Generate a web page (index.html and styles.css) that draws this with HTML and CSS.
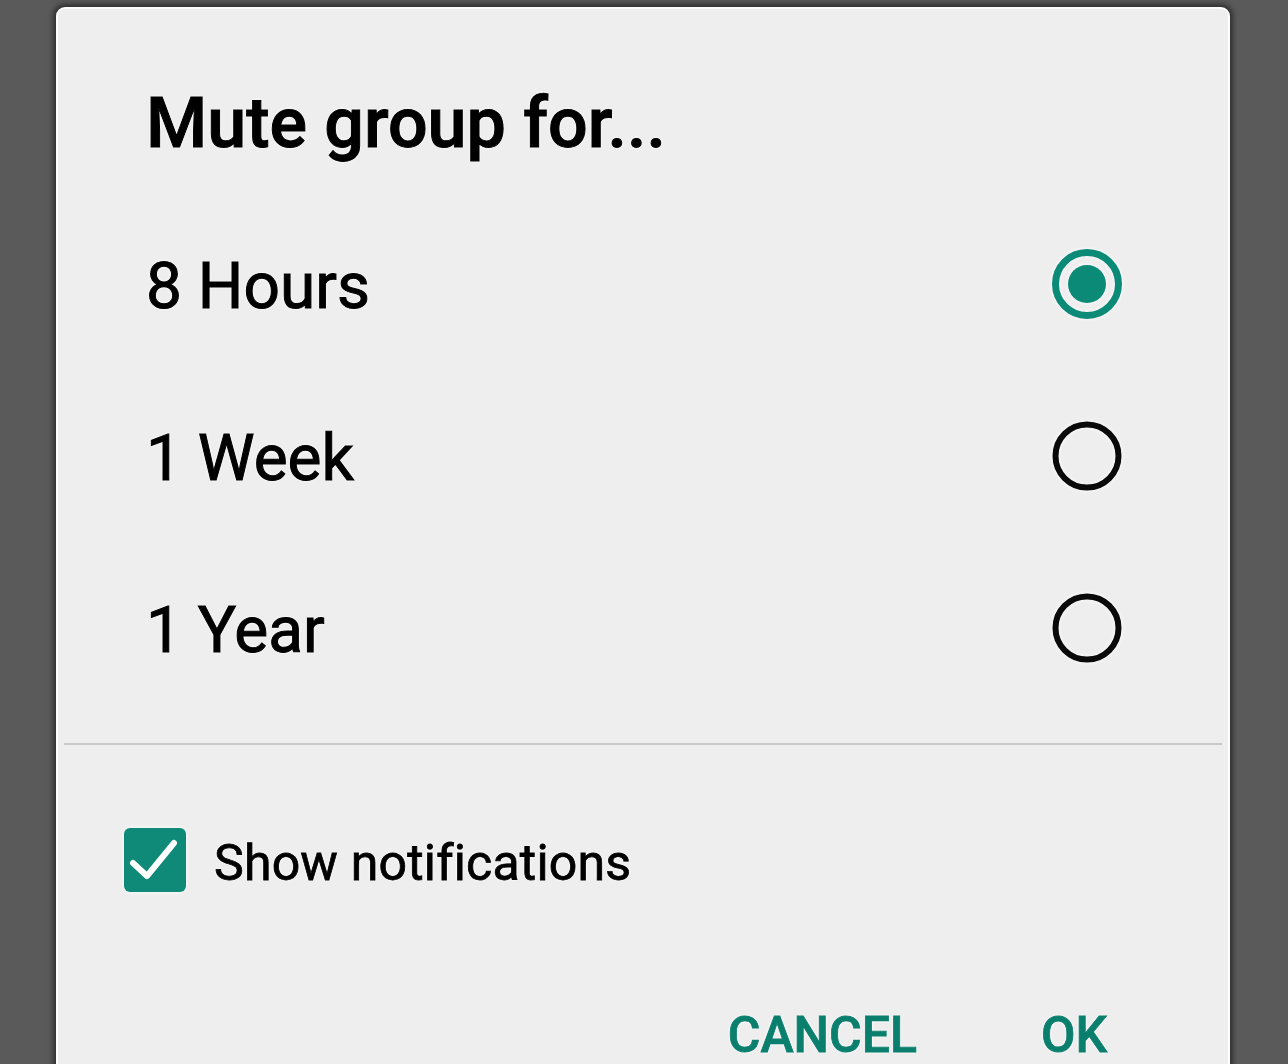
FILE: index.html
```html
<!DOCTYPE html>
<html lang="en">
<head>
  <meta charset="UTF-8">
  <meta name="viewport" content="width=device-width, initial-scale=1.0">
  <title>Mute group</title>
  <link rel="stylesheet" href="styles.css">
</head>
<body>
  <div class="dialog">
    <h2 class="dialog-title">Mute group for...</h2>

    <!-- Duration options -->
    <div class="options">
      <label class="option">
        <span class="option-text">8 Hours</span>
        <svg class="radio" width="72" height="72" viewBox="0 0 72 72">
          <circle cx="36" cy="36" r="31.5" fill="none" stroke="#0b8a78" stroke-width="7"/>
          <circle cx="36" cy="36" r="19" fill="#0b8a78"/>
        </svg>
      </label>
      <label class="option">
        <span class="option-text">1 Week</span>
        <svg class="radio" width="72" height="72" viewBox="0 0 72 72">
          <circle cx="36" cy="36" r="31.5" fill="none" stroke="#0a0a0a" stroke-width="6"/>
        </svg>
      </label>
      <label class="option">
        <span class="option-text">1 Year</span>
        <svg class="radio" width="72" height="72" viewBox="0 0 72 72">
          <circle cx="36" cy="36" r="31.5" fill="none" stroke="#0a0a0a" stroke-width="6"/>
        </svg>
      </label>
    </div>

    <div class="divider"></div>

    <label class="check-row">
      <svg class="checkbox" width="62" height="64" viewBox="0 0 62 64">
        <rect x="0" y="0" width="62" height="64" rx="6" fill="#0f8a79"/>
        <polyline points="9,35 23,48 50,15" fill="none" stroke="#fff" stroke-width="6" stroke-linecap="round" stroke-linejoin="round"/>
      </svg>
      <span class="check-text">Show notifications</span>
    </label>

    <div class="button-group">
      <button class="btn">CANCEL</button>
      <button class="btn">OK</button>
    </div>
  </div>
</body>
</html>
```

FILE: styles.css
```css
html, body {
  height: 100%;
}
body {
  margin: 0;
  padding: 7px 0 0 0;
  background-color: #5a5a5a;
  font-family: Roboto, "Liberation Sans", Arial, sans-serif;
  overflow: hidden;
  box-sizing: border-box;
}
.dialog {
  margin-left: 56px;
  width: 1174px;
  height: 1120px;
  box-sizing: border-box;
  background: #eeeeee;
  border: 2px solid #fdfdfd;
  border-radius: 9px 9px 0 0;
  box-shadow: 0 0 5px 3px rgba(20, 20, 20, 0.6);
  padding-top: 79px;
}
.dialog-title {
  margin: 0 0 40px 0;
  padding-left: 88px;
  font-size: 70px;
  line-height: 70px;
  font-weight: 500;
  color: #000;
  -webkit-text-stroke: 1px #000;
  text-shadow: 0 0 3px #fff, 0 0 3px #fff;
}
.option {
  display: flex;
  align-items: center;
  justify-content: space-between;
  height: 172px;
  padding: 0 105px 0 88px;
}
.option-text {
  padding-top: 6px;
  font-size: 64px;
  line-height: 64px;
  color: #000;
  -webkit-text-stroke: 1px #000;
  text-shadow: 0 0 3px #fff, 0 0 3px #fff;
}
.radio {
  filter: drop-shadow(0 0 2px #fff);
}
.divider {
  height: 2px;
  margin: 29px 6px 0 6px;
  background: #c9c9c9;
}
.check-row {
  display: flex;
  align-items: center;
  height: 120px;
  margin-top: 55px;
  padding-left: 66px;
}
.checkbox {
  filter: drop-shadow(0 0 2px #fff);
}
.check-text {
  margin-left: 28px;
  padding-top: 6px;
  font-size: 50px;
  line-height: 50px;
  letter-spacing: 0.2px;
  color: #000;
  -webkit-text-stroke: 0.8px #000;
  text-shadow: 0 0 3px #fff, 0 0 3px #fff;
}
.button-group {
  display: flex;
  justify-content: flex-end;
  gap: 124px;
  margin-top: 90px;
  padding-right: 121px;
}
.btn {
  background: none;
  border: none;
  padding: 0;
  font-family: Roboto, "Liberation Sans", Arial, sans-serif;
  font-size: 50px;
  line-height: 50px;
  font-weight: 500;
  color: #0b7f6e;
  -webkit-text-stroke: 0.8px #0b7f6e;
  cursor: pointer;
  text-shadow: 0 0 3px #fff, 0 0 3px #fff;
}
```
